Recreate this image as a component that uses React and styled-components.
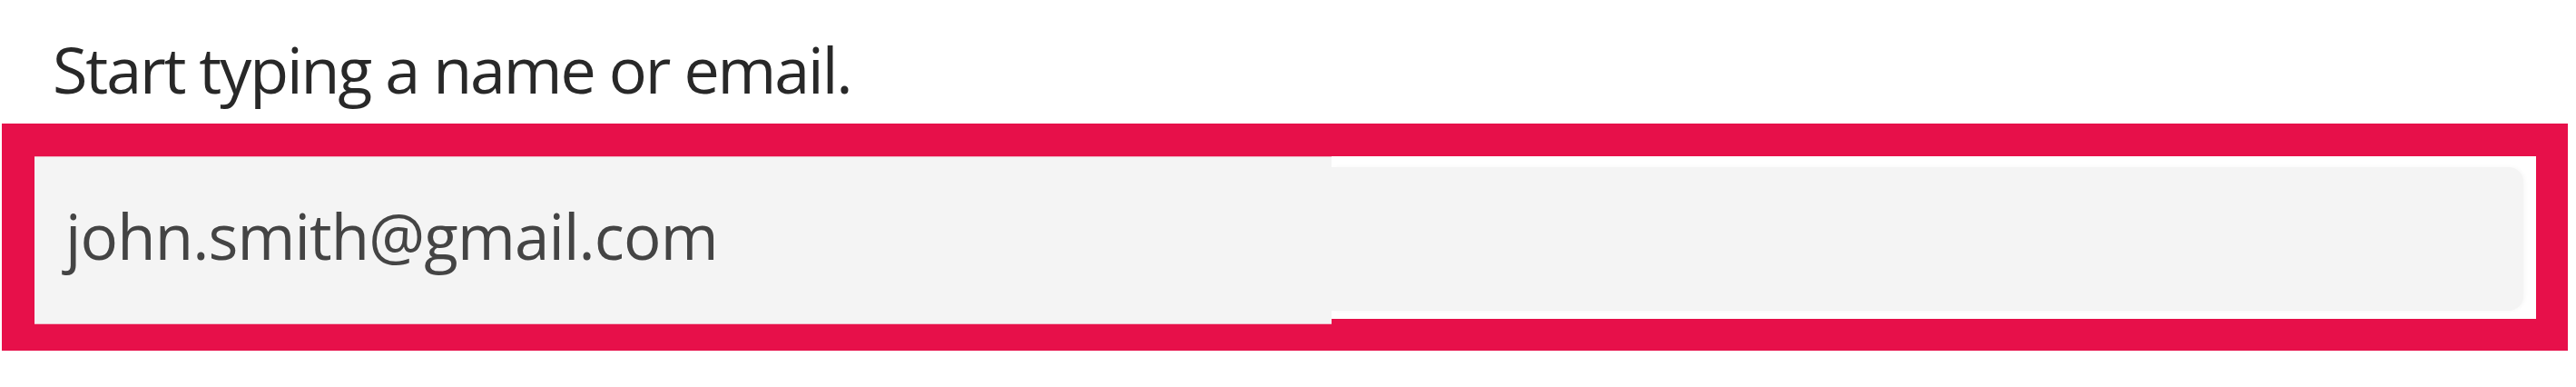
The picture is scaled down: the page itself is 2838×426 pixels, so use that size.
import styled, { createGlobalStyle } from "styled-components";

const GlobalStyle = createGlobalStyle`
  html, body {
    margin: 0;
    padding: 0;
    background: #ffffff;
  }
  body {
    font-family: "Open Sans", "Noto Sans", sans-serif;
  }
`

const Page = styled.div`
  width: 2838px;
  height: 426px;
  overflow: hidden;
  padding-top: 41px;
  box-sizing: border-box;
`

const Hint = styled.p`
  margin: 0 0 25px 58px;
  font-size: 70px;
  line-height: 1;
  color: #282828;
  letter-spacing: -2.1px;
`

const Frame = styled.div`
  display: flex;
  margin-left: 2px;
  width: 2756px;
  height: 182px;
  border-style: solid;
  border-color: #e7104a;
  border-width: 36px 35px 32px 36px;
`

const Patch = styled.div`
  display: flex;
  align-items: center;
  width: 1429px;
  height: 185px;
  margin-bottom: -3px;
  padding: 0 0 10px 34px;
  box-sizing: border-box;
  background: #f4f4f4;
  border-top: 1px solid #f0b8c6;
  border-bottom: 1px solid #f0b8c6;
  position: relative;
  z-index: 1;
`

const Email = styled.span`
  font-size: 69px;
  line-height: 1;
  color: #444444;
  letter-spacing: -0.85px;
`

const Field = styled.div`
  flex: 1;
  display: flex;
  padding: 12px 14px 9px 0;
  background: #ffffff;
  border-bottom: 3px solid #e7104a;
`

const InputBox = styled.div`
  flex: 1;
  background: #f4f4f4;
  border-radius: 0 16px 16px 0;
  box-shadow: 2px 0 4px rgba(0, 0, 0, 0.03);
`

export default function App() {
  return (
    <Page>
      <GlobalStyle />
      <Hint>Start typing a name or email.</Hint>
      <Frame>
        <Patch>
          <Email>john.smith@gmail.com</Email>
        </Patch>
        <Field>
          <InputBox />
        </Field>
      </Frame>
    </Page>
  )
}
